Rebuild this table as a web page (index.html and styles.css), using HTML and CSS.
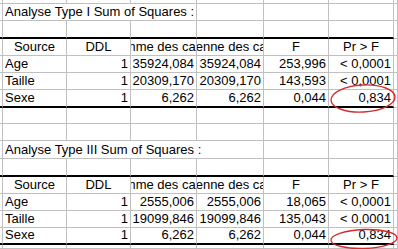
FILE: index.html
```html
<!DOCTYPE html>
<html>
<head>
<meta charset="utf-8">
<link rel="stylesheet" href="styles.css">
</head>
<body>
<div class="sheet">
  <div class="grid">
    <!-- r0 partial row -->
    <div class="c h4"></div><div class="c h4"></div><div class="c h4"></div><div class="c h4"></div><div class="c h4"></div><div class="c h4"></div><div class="c h4"></div><div class="c h4"></div>
    <!-- title 1 -->
    <div class="c"></div><div class="c title span3">Analyse Type I Sum of Squares :</div><div class="c"></div><div class="c"></div><div class="c"></div><div class="c"></div>
    <!-- empty before header -->
    <div class="c tb h18"></div><div class="c tb h18"></div><div class="c tb h18"></div><div class="c tb h18"></div><div class="c tb h18"></div><div class="c tb h18"></div><div class="c tb h18"></div><div class="c h18"></div>
    <!-- header -->
    <div class="c"></div><div class="c ctr">Source</div><div class="c ctr">DDL</div><div class="c ctr clip">Somme des carrés</div><div class="c ctr clip">Moyenne des carrés</div><div class="c ctr">F</div><div class="c ctr">Pr &gt; F</div><div class="c"></div>
    <!-- Age -->
    <div class="c"></div><div class="c lft">Age</div><div class="c num">1</div><div class="c num">35924,084</div><div class="c num">35924,084</div><div class="c num">253,996</div><div class="c num">&lt; 0,0001</div><div class="c"></div>
    <!-- Taille -->
    <div class="c"></div><div class="c lft">Taille</div><div class="c num">1</div><div class="c num">20309,170</div><div class="c num">20309,170</div><div class="c num">143,593</div><div class="c num">&lt; 0,0001</div><div class="c"></div>
    <!-- Sexe -->
    <div class="c tb h18"></div><div class="c tb h18 lft">Sexe</div><div class="c tb h18 num">1</div><div class="c tb h18 num">6,262</div><div class="c tb h18 num">6,262</div><div class="c tb h18 num">0,044</div><div class="c tb h18 num">0,834</div><div class="c h18"></div>
    <!-- empty -->
    <div class="c h16"></div><div class="c h16"></div><div class="c h16"></div><div class="c h16"></div><div class="c h16"></div><div class="c h16"></div><div class="c h16"></div><div class="c h16"></div>
    <!-- empty -->
    <div class="c"></div><div class="c"></div><div class="c"></div><div class="c"></div><div class="c"></div><div class="c"></div><div class="c"></div><div class="c"></div>
    <!-- title 2 -->
    <div class="c h18"></div><div class="c h18 title span3 open">Analyse Type III Sum of Squares :</div><div class="c h18"></div><div class="c h18"></div><div class="c h18"></div><div class="c h18"></div>
    <!-- empty before header -->
    <div class="c tb h18"></div><div class="c tb h18"></div><div class="c tb h18"></div><div class="c tb h18"></div><div class="c tb h18"></div><div class="c tb h18"></div><div class="c tb h18"></div><div class="c h18"></div>
    <!-- header -->
    <div class="c"></div><div class="c ctr">Source</div><div class="c ctr">DDL</div><div class="c ctr clip">Somme des carrés</div><div class="c ctr clip">Moyenne des carrés</div><div class="c ctr">F</div><div class="c ctr">Pr &gt; F</div><div class="c"></div>
    <!-- Age -->
    <div class="c"></div><div class="c lft">Age</div><div class="c num">1</div><div class="c num">2555,006</div><div class="c num">2555,006</div><div class="c num">18,065</div><div class="c num">&lt; 0,0001</div><div class="c"></div>
    <!-- Taille -->
    <div class="c"></div><div class="c lft">Taille</div><div class="c num">1</div><div class="c num">19099,846</div><div class="c num">19099,846</div><div class="c num">135,043</div><div class="c num">&lt; 0,0001</div><div class="c"></div>
    <!-- Sexe -->
    <div class="c tb"></div><div class="c tb lft">Sexe</div><div class="c tb num">1</div><div class="c tb num">6,262</div><div class="c tb num">6,262</div><div class="c tb num">0,044</div><div class="c tb num">0,834</div><div class="c"></div>
    <!-- partial -->
    <div class="c h4"></div><div class="c h4"></div><div class="c h4"></div><div class="c h4"></div><div class="c h4"></div><div class="c h4"></div><div class="c h4"></div><div class="c h4"></div>
  </div>
  <svg class="marks" width="398" height="249" viewBox="0 0 398 249">
    <ellipse cx="363" cy="98.5" rx="32" ry="13.5" transform="rotate(-3 363 98.5)" fill="none" stroke="#d42a2a" stroke-width="1.4"/>
    <ellipse cx="364" cy="239" rx="33" ry="9.5" transform="rotate(-2 364 239)" fill="none" stroke="#d42a2a" stroke-width="1.4"/>
  </svg>
</div>
</body>
</html>
```

FILE: styles.css
```css
html, body {
  margin: 0;
  padding: 0;
  background: #ffffff;
}

.sheet {
  position: relative;
  width: 398px;
  height: 249px;
  overflow: hidden;
  font-family: "Liberation Sans", Arial, sans-serif;
  font-size: 13px;
  color: #000000;
}

.grid {
  display: grid;
  grid-template-columns: 3px 64px 64px 66px 67px 65px 65px 4px;
  grid-auto-rows: auto;
}

.c {
  box-sizing: border-box;
  height: 17px;
  border-right: 1px solid #c0c0c0;
  border-bottom: 1px solid #c0c0c0;
  display: flex;
  align-items: flex-end;
  line-height: 16px;
  white-space: nowrap;
  min-width: 0;
}

.h4 { height: 4px; }
.h16 { height: 16px; }
.h18 { height: 18px; }

.tb {
  border-bottom: 2px solid #000000;
}

.span3 {
  grid-column: span 3;
}

.title {
  padding-left: 2px;
  position: relative;
  z-index: 1;
}

.open {
  border-right: none;
  overflow: visible;
}

.ctr {
  justify-content: center;
}

.clip {
  overflow: hidden;
}

.lft {
  padding-left: 2px;
}

.num {
  justify-content: flex-end;
  padding-right: 2px;
}

.marks {
  position: absolute;
  left: 0;
  top: 0;
  pointer-events: none;
}
```
